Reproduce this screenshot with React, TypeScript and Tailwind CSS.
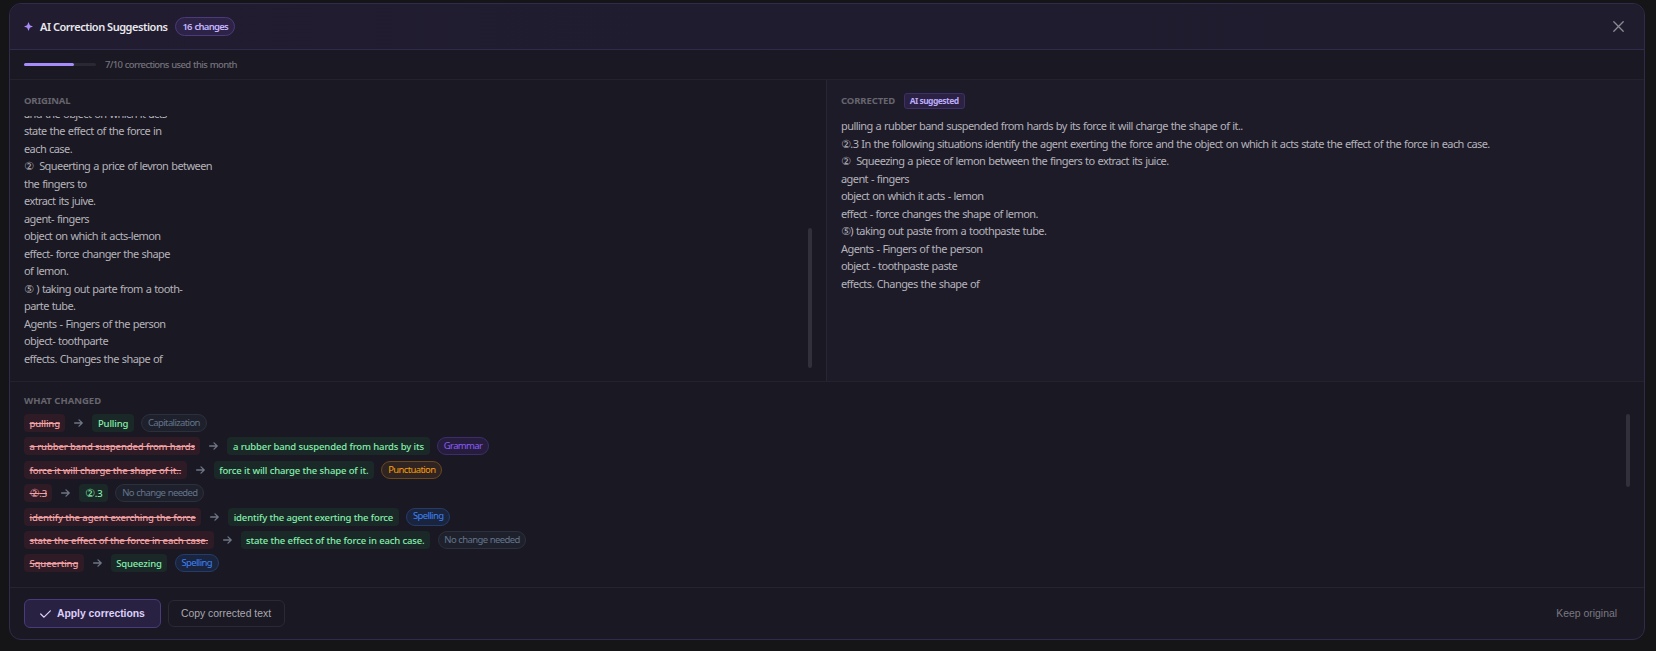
import React from 'react';
import { clsx } from 'clsx';

const originalLines = [
  'and the object on which it acts',
  'state the effect of the force in',
  'each case.',
  '②  Squeerting a price of levron between',
  'the fingers to',
  'extract its juive.',
  'agent- fingers',
  'object on which it acts-lemon',
  'effect- force changer the shape',
  'of lemon.',
  '⑤ ) taking out parte from a tooth-',
  'parte tube.',
  'Agents - Fingers of the person',
  'object- toothparte',
  'effects. Changes the shape of',
];

const correctedLines = [
  'pulling a rubber band suspended from hards by its force it will charge the shape of it..',
  '②.3 In the following situations identify the agent exerting the force and the object on which it acts state the effect of the force in each case.',
  '②  Squeezing a piece of lemon between the fingers to extract its juice.',
  'agent - fingers',
  'object on which it acts - lemon',
  'effect - force changes the shape of lemon.',
  '⑤) taking out paste from a toothpaste tube.',
  'Agents - Fingers of the person',
  'object - toothpaste paste',
  'effects. Changes the shape of',
];

const tagStyles: Record<string, string> = {
  Capitalization: 'text-[#64748b] bg-[#1e212c] border-[#2b303d]',
  'No change needed': 'text-[#64748b] bg-[#1e212c] border-[#2b303d]',
  Grammar: 'text-[#8b5cf6] bg-[#261d3e] border-[#3d2d6b]',
  Punctuation: 'text-[#f59e0b] bg-[#302422] border-[#69481d]',
  Spelling: 'text-[#3b82f6] bg-[#1b243d] border-[#243c6c]',
};

const changes = [
  { from: 'pulling', to: 'Pulling', tag: 'Capitalization' },
  { from: 'a rubber band suspended from hards', to: 'a rubber band suspended from hards by its', tag: 'Grammar' },
  { from: 'force it will charge the shape of it..', to: 'force it will charge the shape of it.', tag: 'Punctuation' },
  { from: '②.3', to: '②.3', tag: 'No change needed' },
  { from: 'identify the agent exerching the force', to: 'identify the agent exerting the force', tag: 'Spelling' },
  { from: 'state the effect of the force in each case.', to: 'state the effect of the force in each case.', tag: 'No change needed' },
  { from: 'Squeerting', to: 'Squeezing', tag: 'Spelling' },
];

// circled numbers need a larger, wider glyph than the text around them
const withCircled = (text: string) =>
  /^[②⑤]/.test(text) ? (
    <>
      <span className="font-['DejaVu_Sans'] text-[11px] leading-none">{text[0]}</span>
      {text.slice(1)}
    </>
  ) : (
    text
  );

const Header = () => (
  <div className="flex h-[46px] shrink-0 items-center border-b border-[#302b4c] bg-linear-to-r from-[#211c30] to-[#1f1c2e] pl-[14px] pr-[20px]">
    <svg className="h-[9px] w-[9px]" viewBox="0 0 10 10">
      <path d="M5 0L6.5 3.5L10 5L6.5 6.5L5 10L3.5 6.5L0 5L3.5 3.5Z" fill="#a78bfa" />
    </svg>
    <h2 className="ml-[7px] pt-px text-[11px] font-semibold tracking-[-0.47px] text-[#e8e8ec]">AI Correction Suggestions</h2>
    <span className="ml-[7.5px] flex h-[19px] items-center rounded-full border border-[#4b3a7c] bg-[#2d2347] pl-[6.5px] pr-[6px] pt-px text-[9.5px] font-semibold tracking-[-0.75px] text-[#c4b5fd] [word-spacing:1px]">
      16 changes
    </span>
    <svg className="ml-auto h-[11px] w-[11px]" viewBox="0 0 11 11" fill="none" stroke="#8b8994" strokeWidth="1.3" strokeLinecap="round">
      <path d="M0.8 0.8L10.2 10.2M10.2 0.8L0.8 10.2" />
    </svg>
  </div>
);

const UsageBar = () => (
  <div className="flex h-[30px] shrink-0 items-center border-b border-[#24222d] px-[14px]">
    <div className="h-[3px] w-[72px] rounded-full bg-[#2a2832]">
      <div className="h-full w-[50px] rounded-full bg-[#a78bfa]" />
    </div>
    <span className="ml-[9px] pt-px text-[9.5px] font-medium tracking-[-0.64px] text-[#74737c] [word-spacing:0.6px]">7/10 corrections used this month</span>
  </div>
);

const TextLines = ({ lines }: { lines: string[] }) => (
  <div className="text-[11px] leading-[17.5px] tracking-[-0.58px] text-[#b4b3ba] [word-spacing:0.65px]">
    {lines.map((line) => (
      <p key={line} className="h-[17.5px] whitespace-pre">{withCircled(line)}</p>
    ))}
  </div>
);

const ChangeRow = ({ from, to, tag }: { from: string; to: string; tag: string }) => (
  <div className="flex h-[18px] items-center text-[9.5px] font-medium tracking-[-0.14px] [word-spacing:0.1px]">
    <span className="h-[18px] rounded-[4px] bg-[#2f1b25] px-[5.5px] leading-[19px] text-[#f2a3a5] line-through">{withCircled(from)}</span>
    <span className="flex w-[27px] justify-center">
      <svg className="h-[8px] w-[9px]" viewBox="0 0 9 8" fill="none" stroke="#6f7686" strokeWidth="1.3" strokeLinecap="round" strokeLinejoin="round">
        <path d="M0.6 4H8.2M5 0.9L8.2 4L5 7.1" />
      </svg>
    </span>
    <span className="h-[18px] rounded-[4px] bg-[#1a2928] px-[5.5px] leading-[19px] text-[#86efac]">{withCircled(to)}</span>
    <span className={clsx('ml-[7.5px] flex h-[18px] items-center rounded-full border px-[5.75px] text-[9.5px] font-normal tracking-[-0.63px] [word-spacing:0.5px]', tagStyles[tag])}>
      {tag}
    </span>
  </div>
);

const Comparison = () => (
  <div className="grid h-[302px] shrink-0 grid-cols-[816px_1fr] border-b border-[#24222d]">
    <div className="pl-[14px] pr-[14px] pt-[14px]">
      <h3 className="h-[13px] text-[9.5px] font-bold leading-[13px] tracking-[-0.15px] text-[#66656e]">ORIGINAL</h3>
      <div className="mt-[9px] flex h-[252px] items-end justify-between overflow-hidden">
        <div className="pb-px">
          <TextLines lines={originalLines} />
        </div>
        <div className="h-[140px] w-[4px] rounded-full bg-[#32303a]" />
      </div>
    </div>
    <div className="border-l border-[#282632] bg-[#1e1b29] pl-[14px] pt-[13px]">
      <div className="mb-[8.4px] flex h-[16px] items-center">
        <h3 className="pt-px text-[9.5px] font-bold tracking-[-0.1px] text-[#66656e]">CORRECTED</h3>
        <span className="ml-[8.5px] flex h-[16px] items-center rounded-[3px] border border-[#3d3066] bg-[#2a2143] pl-[5px] pr-[5.5px] text-[8.5px] font-bold tracking-[-0.55px] text-[#bbaaf8]">
          AI suggested
        </span>
      </div>
      <TextLines lines={correctedLines} />
    </div>
  </div>
);

const App = () => {
  return (
    <div className="h-[651px] bg-[#151517] pl-[9px] pr-[11px] pt-[3px] font-['Noto_Sans','DejaVu_Sans',sans-serif]">
      <div className="flex h-[637px] flex-col overflow-hidden rounded-[12px] border border-[#302b4c] bg-[#1a1822]">
        <Header />
        <UsageBar />
        <Comparison />
        <div className="h-[205px] shrink-0 pl-[14px] pr-[14px] pt-[12px]">
          <h3 className="h-[13px] text-[9.5px] font-bold leading-[13px] tracking-[0px] text-[#66656e]">WHAT CHANGED</h3>
          <div className="mt-[7px] flex justify-between">
            <div className="flex flex-col gap-[5.4px]">
              {changes.map((change) => (
                <ChangeRow key={change.from} {...change} />
              ))}
            </div>
            <div className="h-[73px] w-[4px] rounded-full bg-[#32303a]" />
          </div>
        </div>
        <div className="flex flex-1 items-center border-t border-[#262430] pl-[14px] pr-[27px] font-['Liberation_Sans',sans-serif] text-[10.4px]">
          <button className="flex h-[29px] w-[137px] items-center rounded-[6px] border border-[#4b3a7c] bg-[#292141] pl-[15px] font-bold tracking-[-0.03px] text-[#ddd0fb]">
            <svg className="mr-[6px] h-[8px] w-[11px]" viewBox="0 0 11 8" fill="none" stroke="#ddd0fb" strokeWidth="1.2" strokeLinecap="round" strokeLinejoin="round">
              <path d="M0.7 4L4 7.2L10.3 0.8" />
            </svg>
            Apply corrections
          </button>
          <button className="ml-[7px] h-[27px] w-[117px] rounded-[6px] border border-[#2b2933] pr-px text-[#a9a8b0]">Copy corrected text</button>
          <button className="ml-auto text-[#7b7983]">Keep original</button>
        </div>
      </div>
    </div>
  );
};

export default App;
